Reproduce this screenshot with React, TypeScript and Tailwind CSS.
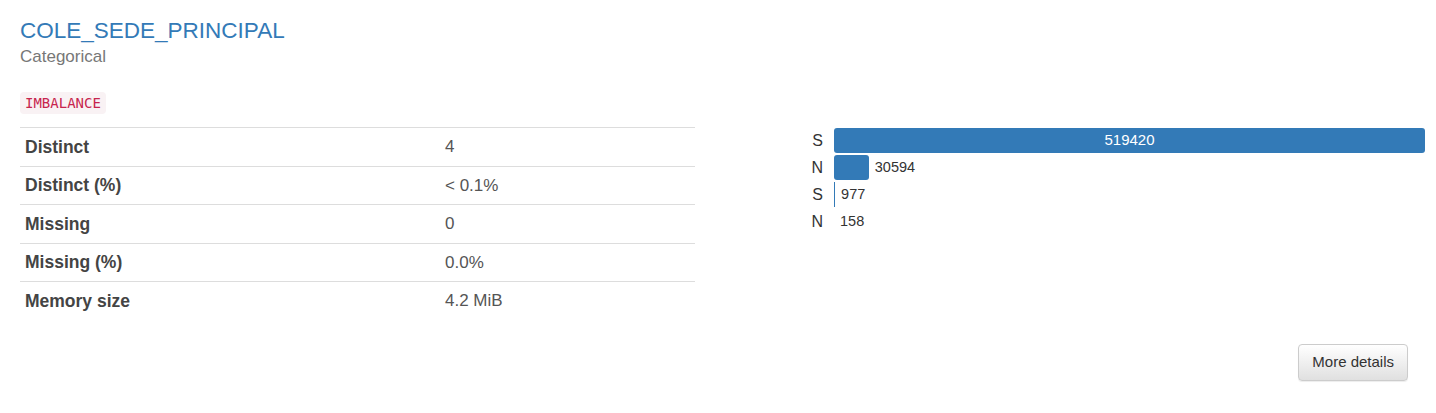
const stats = [
  { label: 'Distinct', value: '4' },
  { label: 'Distinct (%)', value: '< 0.1%' },
  { label: 'Missing', value: '0' },
  { label: 'Missing (%)', value: '0.0%' },
  { label: 'Memory size', value: '4.2 MiB' },
];

const freqs = [
  { key: 'S', count: 519420 },
  { key: 'N', count: 30594 },
  { key: 'S', count: 977 },
  { key: 'N', count: 158 },
];

const max = Math.max(...freqs.map((f) => f.count));

export default function App() {
  return (
    <div className="w-full min-h-[413px] bg-white pl-[20px] pr-[11px] pt-[19px] font-['Liberation_Sans',Arial,sans-serif]">
      {/* Header */}
      <div className="text-[22.5px] leading-[24px] text-[#337ab7]">COLE_SEDE_PRINCIPAL</div>
      <div className="mt-[4px] text-[17px] leading-[20px] text-[#777]">Categorical</div>

      <div className="mt-[25px] flex">
        <code className="rounded-[4px] bg-[#f9f2f4] px-[5px] py-[1px] font-['DejaVu_Sans_Mono','Liberation_Mono',monospace] text-[14px] leading-[20px] text-[#c7254e]">
          IMBALANCE
        </code>
      </div>

      <div className="mt-[13px] flex items-start">
        {/* Stats table */}
        <table className="w-[675px] border-collapse">
          <tbody>
            {stats.map((s) => (
              <tr key={s.label} className="border-t border-[#ddd]">
                <th className="h-[38.5px] w-[420px] px-[5px] text-left text-[17.5px] font-bold text-[#444]">{s.label}</th>
                <td className="h-[38.5px] px-[5px] text-[17px] text-[#555]">{s.value}</td>
              </tr>
            ))}
          </tbody>
        </table>

        {/* Frequency bars */}
        <div className="ml-[110px] flex flex-1 flex-col gap-[2px] pt-[1px]">
          {freqs.map((f, i) => {
            const w = (f.count / max) * 100;
            const inside = w > 50;
            return (
              <div key={i} className="flex h-[25px] items-center">
                <span className="w-[18px] text-right text-[16px] text-[#333]">{f.key}</span>
                <div className="ml-[11px] flex h-full flex-1 items-center">
                  {w >= 0.1 && (
                    <div
                      className={
                        w >= 1
                          ? 'flex h-full items-center justify-center rounded-[3px] bg-[#337ab7]'
                          : 'h-full bg-[#337ab7]'
                      }
                      style={{ width: `${w}%` }}
                    >
                      {inside && <span className="text-[15px] text-white">{f.count}</span>}
                    </div>
                  )}
                  {!inside && <span className="ml-[6px] text-[14.5px] text-[#333]">{f.count}</span>}
                </div>
              </div>
            );
          })}
        </div>
      </div>

      <div className="mt-[24px] flex justify-end pr-[17px]">
        <button className="h-[37px] rounded-[4px] border border-[#ccc] bg-gradient-to-b from-white to-[#e0e0e0] px-[13px] text-[15px] text-[#333] shadow-[inset_0_1px_0_rgba(255,255,255,0.15),0_1px_1px_rgba(0,0,0,0.075)]">
          More details
        </button>
      </div>
    </div>
  );
}
